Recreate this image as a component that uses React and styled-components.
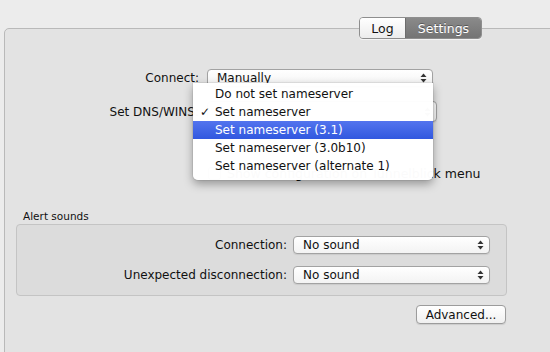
import styled, { createGlobalStyle } from "styled-components";

const GlobalStyle = createGlobalStyle`
  html, body {
    margin: 0;
    padding: 0;
    background: #ececec;
    font-family: "DejaVu Sans", "Liberation Sans", sans-serif;
    font-size: 12px;
    color: #111;
  }
`;

const Page = styled.div`
  position: relative;
  width: 550px;
  height: 352px;
  overflow: hidden;
  padding-top: 17px;
  box-sizing: border-box;
`;

const TabBar = styled.div`
  position: relative;
  z-index: 2;
  display: flex;
  justify-content: flex-end;
  padding-right: 68px;
`;

const Segmented = styled.div`
  display: flex;
  height: 20px;
  border: 1px solid #8e8e8e;
  border-radius: 4px;
  overflow: hidden;
  box-shadow: 0 1px 0 rgba(255, 255, 255, 0.6);
`;

const Segment = styled.div`
  display: flex;
  align-items: center;
  justify-content: center;
  width: ${(p) => p.$w}px;
  font-size: 12.5px;
  color: ${(p) => (p.$active ? "#fff" : "#111")};
  text-shadow: ${(p) => (p.$active ? "0 -1px 0 rgba(0,0,0,0.35)" : "none")};
  background: ${(p) =>
    p.$active
      ? "linear-gradient(#8a8a8a, #747474)"
      : "linear-gradient(#ffffff, #ececec)"};
  border-left: ${(p) => (p.$active ? "1px solid #6c6c6c" : "none")};
`;

const TabBox = styled.div`
  margin: -11px -20px 0 4px;
  height: 360px;
  border: 1px solid #b9b9b9;
  border-radius: 5px;
  background: #e3e3e3;
  box-sizing: border-box;
  padding-top: 40px;
`;

const FormGrid = styled.div`
  display: grid;
  grid-template-columns: 194px 230px;
  column-gap: 8px;
  row-gap: 14px;
  align-items: center;
`;

const Label = styled.div`
  text-align: right;
  white-space: nowrap;
  font-size: 12px;
`;

const Popup = styled.div`
  position: relative;
  display: flex;
  align-items: center;
  height: ${(p) => p.$h || 18}px;
  width: ${(p) => p.$w}px;
  box-sizing: border-box;
  padding-left: 9px;
  border: 1px solid #a2a2a2;
  border-radius: 4px;
  background: linear-gradient(#ffffff, #f3f3f3);
  box-shadow: 0 1px 1px rgba(0, 0, 0, 0.08);
  font-size: 12px;
  white-space: nowrap;
`;

const Arrows = styled.svg`
  position: absolute;
  right: 5px;
  top: 50%;
  margin-top: -5px;
`;

const CheckRow = styled.div`
  display: flex;
  align-items: center;
  gap: 6px;
  margin: 44px 0 0 203px;
  font-size: 12.5px;
`;

const CheckBox = styled.div`
  width: 13px;
  height: 13px;
  box-sizing: border-box;
  border: 1px solid #8a8a8a;
  border-radius: 3px;
  background: linear-gradient(#fff, #ececec);
`;

const GroupTitle = styled.div`
  font-size: 10.5px;
  margin: 29px 0 2px 18px;
`;

const Group = styled.div`
  margin-left: 11px;
  width: 491px;
  height: 72px;
  box-sizing: border-box;
  border: 1px solid #c4c4c4;
  border-radius: 4px;
  background: #dcdcdc;
  padding-top: 11px;
`;

const GroupGrid = styled.div`
  display: grid;
  grid-template-columns: 270px 197px;
  column-gap: 6px;
  row-gap: 12px;
  align-items: center;
`;

const ButtonRow = styled.div`
  display: flex;
  justify-content: flex-end;
  margin: 9px 63px 0 0;
`;

const PushButton = styled.div`
  display: flex;
  align-items: center;
  justify-content: center;
  width: 90px;
  height: 19px;
  box-sizing: border-box;
  border: 1px solid #9c9c9c;
  border-radius: 4px;
  background: linear-gradient(#ffffff, #f0f0f0);
  box-shadow: 0 1px 1px rgba(0, 0, 0, 0.1);
  font-size: 12px;
`;

const Menu = styled.div`
  position: absolute;
  z-index: 5;
  left: 193px;
  top: 83px;
  width: 240px;
  padding: 2px 0 5px;
  background: rgba(255, 255, 255, 0.98);
  border-radius: 0 0 5px 5px;
  box-shadow: 0 4px 10px rgba(0, 0, 0, 0.35), 0 0 0 1px rgba(0, 0, 0, 0.06);
`;

const MenuItem = styled.div`
  position: relative;
  height: 18px;
  display: flex;
  align-items: center;
  padding-left: 22px;
  font-size: 12px;
  color: ${(p) => (p.$hi ? "#fff" : "#111")};
  background: ${(p) =>
    p.$hi ? "linear-gradient(#5374ee, #3158df)" : "transparent"};
`;

const Check = styled.span`
  position: absolute;
  left: 7px;
  font-size: 12px;
`;

const UpDown = () => (
  <Arrows width="7" height="10" viewBox="0 0 7 10">
    <path d="M3.5 0.5 L6.5 4 L0.5 4 Z" fill="#333" />
    <path d="M3.5 9.5 L6.5 6 L0.5 6 Z" fill="#333" />
  </Arrows>
);

const menuItems = [
  "Do not set nameserver",
  "Set nameserver",
  "Set nameserver (3.1)",
  "Set nameserver (3.0b10)",
  "Set nameserver (alternate 1)",
];

export default function App() {
  return (
    <Page>
      <GlobalStyle />
      <TabBar>
        <Segmented>
          <Segment $w={45}>Log</Segment>
          <Segment $w={75} $active>
            Settings
          </Segment>
        </Segmented>
      </TabBar>
      <TabBox>
        <FormGrid>
          <Label>Connect:</Label>
          <Popup $w={226}>
            Manually
            <UpDown />
          </Popup>
          <Label>Set DNS/WINS:</Label>
          <Popup $w={230} $h={21}>
            Set nameserver
            <UpDown />
          </Popup>
        </FormGrid>
        <CheckRow>
          <CheckBox />
          Show configuration on Tunnelblick menu
        </CheckRow>
        <GroupTitle>Alert sounds</GroupTitle>
        <Group>
          <GroupGrid>
            <Label>Connection:</Label>
            <Popup $w={197}>
              No sound
              <UpDown />
            </Popup>
            <Label>Unexpected disconnection:</Label>
            <Popup $w={197}>
              No sound
              <UpDown />
            </Popup>
          </GroupGrid>
        </Group>
        <ButtonRow>
          <PushButton>Advanced...</PushButton>
        </ButtonRow>
      </TabBox>
      <Menu>
        {menuItems.map((item, i) => (
          <MenuItem key={item} $hi={i === 2}>
            {i === 1 && <Check>✓</Check>}
            {item}
          </MenuItem>
        ))}
      </Menu>
    </Page>
  );
}
